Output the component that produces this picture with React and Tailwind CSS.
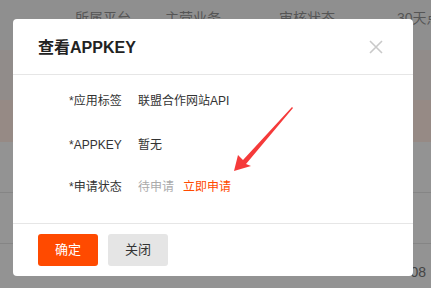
export default function App() {
  const font = { fontFamily: '"Liberation Sans", "Noto Sans CJK SC", sans-serif' };
  return (
    <div className="relative w-[431px] h-[288px] overflow-hidden bg-[#929292]" style={font}>
      {/* page underneath the overlay */}
      <div className="flex flex-col">
        <div className="h-[50px] bg-[#8f8f8f] text-[14px] text-[#555] overflow-hidden">
          <div className="flex pt-[8px] whitespace-nowrap">
            <span className="ml-[75px]">所属平台</span>
            <span className="ml-[34px]">主营业务</span>
            <span className="ml-[58px]">审核状态</span>
            <span className="ml-[62px]">30天点</span>
          </div>
        </div>
        <div className="h-[50px] bg-[#918c8a]" />
        <div className="h-[42px] bg-[#968a85]" />
        <div className="h-[51px] bg-[#939393] border-b border-[#858585]" />
        <div className="h-[51px] bg-[#939393] border-b border-[#858585]" />
        <div className="h-[44px] bg-[#939393] flex justify-end items-start pt-[18px] pr-[5px] text-[14px] text-[#444]">
          08
        </div>
      </div>

      {/* modal */}
      <div className="absolute left-[13px] top-[19px] w-[400px] h-[257px] bg-white rounded-[4px] flex flex-col">
        <div className="h-[56px] border-b border-[#e6e6e6] flex items-center justify-between pl-[25px] pr-[30px]">
          <span className="text-[16px] font-bold text-[#222] pt-[2px]">查看APPKEY</span>
          <svg width="14" height="14" viewBox="0 0 14 14">
            <path d="M1 1L13 13M13 1L1 13" stroke="#c9c9c9" strokeWidth="1.6" />
          </svg>
        </div>
        <div className="flex-1 relative pl-[56px] pt-[16px] text-[12px] text-[#333]">
          <div className="flex h-[20px] items-center">
            <span className="w-[69px]">*应用标签</span>
            <span>联盟合作网站API</span>
          </div>
          <div className="flex h-[20px] items-center mt-[24px]">
            <span className="w-[69px]">*APPKEY</span>
            <span>暂无</span>
          </div>
          <div className="flex h-[20px] items-center mt-[22px]">
            <span className="w-[69px]">*申请状态</span>
            <span className="text-[#aaa]">待申请</span>
            <span className="ml-[9px] text-[#ff4a00]">立即申请</span>
          </div>
          <svg className="absolute left-0 top-0" width="400" height="150" viewBox="0 0 400 150">
            <polygon
              points="280,33 233,89 238,91 221,96 225,80 230,85 279,32"
              fill="#f53a3a"
            />
          </svg>
        </div>
        <div className="h-[53px] border-t border-[#e6e6e6] flex items-center gap-[10px] pl-[25px]">
          <button className="w-[60px] h-[32px] rounded-[3px] bg-[#ff4a00] text-white text-[13px]">确定</button>
          <button className="w-[60px] h-[32px] rounded-[3px] bg-[#e5e5e5] text-[#333] text-[13px]">关闭</button>
        </div>
      </div>
    </div>
  );
}
